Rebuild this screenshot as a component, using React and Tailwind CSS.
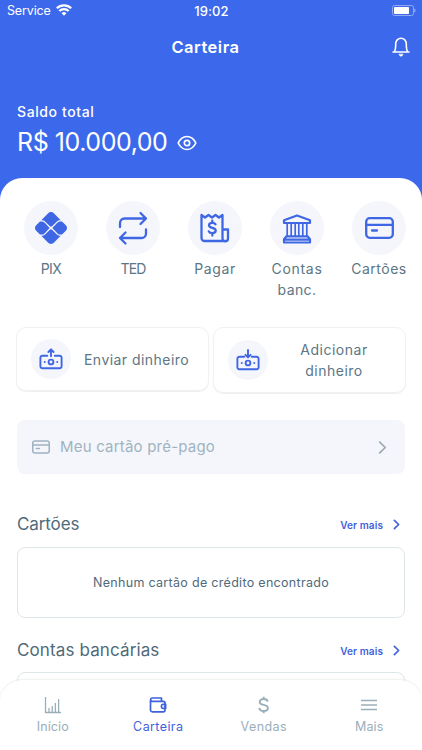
import React from "react";

const shortcuts = [
  { id: "pix", icon: PixIcon, lines: [["PIX", "tracking-[-0.6px]"]] },
  { id: "ted", icon: RepeatIcon, lines: [["TED", "tracking-[-0.9px]"]] },
  { id: "pagar", icon: BillIcon, lines: [["Pagar", "tracking-[0.6px]"]] },
  { id: "contas", icon: BankIcon, lines: [["Contas", "tracking-[0.7px]"], ["banc.", "tracking-[0.4px]"]] },
  { id: "cartoes", icon: CardIcon, lines: [["Cartões", "tracking-[0.5px]"]] },
];

const tabs = [
  { id: "inicio", label: "Início", icon: ChartIcon, track: "tracking-[0.1px]" },
  { id: "carteira", label: "Carteira", icon: WalletIcon, track: "tracking-[0.4px]", active: true },
  { id: "vendas", label: "Vendas", icon: DollarIcon, track: "tracking-[0.4px]" },
  { id: "mais", label: "Mais", icon: MenuIcon, track: "tracking-[0.1px]" },
];

function PixIcon() {
  return (
    <svg width="34" height="34" viewBox="0 0 34 34" fill="currentColor">
      <path d="M7.300 9.300 13.900 2.400a4.300 4.300 0 0 1 6.200 0l6.600 6.900c-1.700 0-2.900.4-4 1.500l-4.400 4.300a1.900 1.900 0 0 1-2.600 0l-4.400-4.300c-1.100-1.100-2.300-1.500-4-1.500z" />
      <path d="M7.300 24.700 13.900 31.600a4.300 4.300 0 0 0 6.200 0l6.600-6.900c-1.700 0-2.900-.4-4-1.500l-4.400-4.300a1.900 1.900 0 0 0-2.600 0l-4.400 4.300c-1.100 1.100-2.300 1.500-4 1.500z" />
      <path d="M6 10.400h1.700c1.200 0 2 .4 2.800 1.200L15.700 17l-5.200 5.400c-.8.800-1.600 1.200-2.800 1.200H6l-3.600-3.700a4.100 4.100 0 0 1 0-5.800z" />
      <path d="M28 10.400h-1.700c-1.200 0-2 .4-2.800 1.200L18.300 17l5.200 5.400c.8.800 1.600 1.200 2.800 1.200H28l3.600-3.700a4.100 4.100 0 0 0 0-5.800z" />
    </svg>
  );
}

function RepeatIcon() {
  return (
    <svg width="34" height="36" viewBox="0 0 34 36" fill="none" stroke="currentColor" strokeWidth="2.300" strokeLinecap="round" strokeLinejoin="round">
      <path d="M4 17v-3.500A4.500 4.500 0 0 1 8.500 8.500H30M24.500 3 30 8.500l-5.500 5.500" />
      <path d="M30 19.500V23.500a4.500 4.500 0 0 1-4.500 4.500H4M9.500 22.500 4 28l5.500 5.500" />
    </svg>
  );
}

function BillIcon() {
  return (
    <svg width="34" height="34" viewBox="0 0 34 34" fill="none" stroke="currentColor" strokeWidth="2.300" strokeLinecap="round" strokeLinejoin="round">
      <path d="M27 30H6.500a3 3 0 0 1-3-3V4l3.500 2.500L10.500 4 14 6.500 17.500 4 21 6.500 24.500 4v23.500a2.700 2.700 0 0 0 5.500 0v-9h-5.500" />
      <path d="M17.500 13.300c-.5-1-1.700-1.500-3.200-1.500-2 0-3.300.9-3.300 2.500 0 3.700 6.700 1.500 6.700 5.300 0 1.700-1.500 2.600-3.400 2.600-1.700 0-3-.6-3.500-1.800M14.300 9.600v2.200M14.300 22.300v2.200" />
    </svg>
  );
}

function BankIcon() {
  return (
    <svg width="34" height="34" viewBox="0 0 34 34" fill="none" stroke="currentColor" strokeWidth="2.200" strokeLinejoin="round">
      <path d="M4 9.300 17 4.500l13 4.800V12H4zM6.500 25.300h21l2.500 3v3.200H4v-3.200zM4.500 28.600h25" />
      <path d="M7.200 12v13M11.200 12v13M15.200 12v13M18.800 12v13M22.800 12v13M26.800 12v13" strokeWidth="1.700" />
    </svg>
  );
}

function CardIcon({ width = 29, height = 22, stroke = 2.3 }) {
  return (
    <svg width={width} height={height} viewBox="0 0 29 22" fill="none" stroke="currentColor" strokeWidth={stroke} strokeLinecap="round">
      <rect x="1.200" y="1.200" width="26.600" height="19.600" rx="3.500" />
      <path d="M1.200 7.800h26.600M7 13.500h5" />
    </svg>
  );
}

function CashIcon({ up }) {
  return (
    <svg width="24" height="24" viewBox="0 0 24 24" fill="none" stroke="currentColor" strokeWidth="1.900" strokeLinecap="round" strokeLinejoin="round">
      <path d="M8.300 8.700H3.500A2 2 0 0 0 1.400 10.700v8.600a2 2 0 0 0 2.100 2h17a2 2 0 0 0 2.100-2v-8.600a2 2 0 0 0-2.100-2h-4.800" />
      <circle cx="12" cy="15" r="2.400" />
      <path d="M5.700 15h.1M18.200 15h.1" />
      {up ? <path d="M12 9.200V2.500M9.400 5 12 2.300 14.600 5" /> : <path d="M12 2v7M9.400 6.800 12 9.400l2.600-2.600" />}
    </svg>
  );
}

function ChartIcon() {
  return (
    <svg width="18" height="18" viewBox="0 0 18 18" fill="none" stroke="currentColor" strokeWidth="1.300">
      <path d="M1.500 1v15.500H17M5 12v4M8.200 10v6M11.400 7v9M14.600 3v13" />
    </svg>
  );
}

function WalletIcon() {
  return (
    <svg width="18" height="18" viewBox="0 0 18 18" fill="none" stroke="currentColor" strokeWidth="1.700" strokeLinejoin="round">
      <path d="M1.500 4v10A1.800 1.800 0 0 0 3.300 15.800h11a1.700 1.700 0 0 0 1.700-1.700V7a1.700 1.700 0 0 0-1.700-1.700H3.300a1.600 1.600 0 0 1 0-3.300h9.200v3.200" />
      <path d="M16.800 8.300h-2.400a2.100 2.100 0 0 0 0 4.200h2.400z" fill="currentColor" fillOpacity="0.250" strokeWidth="1.400" />
    </svg>
  );
}

function DollarIcon() {
  return (
    <svg width="18" height="18" viewBox="0 0 18 18" fill="none" stroke="currentColor" strokeWidth="1.900">
      <path d="M12.700 5.700C12.400 4 10.900 3 8.700 3S4.700 4.100 4.700 5.900C4.700 10.200 12.900 7.500 12.900 12c0 1.900-1.700 3-4.200 3s-4.200-1.200-4.400-3.200M8.700 .8V3M8.700 15v2.200" />
    </svg>
  );
}

function MenuIcon() {
  return (
    <svg width="18" height="18" viewBox="0 0 18 18" stroke="currentColor" strokeWidth="1.500">
      <path d="M1 4.500h16M1 9h16M1 13.500h16" />
    </svg>
  );
}

function Chevron({ size = 14, stroke = 1.7 }) {
  return (
    <svg width={size} height={size} viewBox="0 0 14 14" fill="none" stroke="currentColor" strokeWidth={stroke} strokeLinecap="round" strokeLinejoin="round">
      <path d="m4.700 2.500 4.600 4.500-4.600 4.500" />
    </svg>
  );
}

function StatusBar() {
  return (
    <div className="grid grid-cols-3 h-[22px] pl-[7px] pr-[6px] items-center text-[13px] leading-none">
      <div className="flex items-center gap-[5px] pt-px">
        <span className="text-[12.5px] tracking-[-0.15px]">Service</span>
        <svg width="16" height="12" viewBox="0 0 16 12" fill="none" stroke="currentColor" strokeWidth="2.100" className="-mt-[3px]">
          <path d="M.8 4.300a10.300 10.300 0 0 1 14.400 0M3.300 7a6.800 6.800 0 0 1 9.400 0" />
          <path d="M5.600 9.300a3.400 3.400 0 0 1 4.800 0L8 11.700z" fill="currentColor" stroke="none" />
        </svg>
      </div>
      <span className="text-center font-medium tracking-[0.1px]">19:02</span>
      <svg width="24" height="11" viewBox="0 0 24 11" className="justify-self-end -mt-px">
        <rect x=".5" y=".5" width="21" height="10" rx="2" fill="none" stroke="#8fa9f5" />
        <rect x="2" y="2" width="15" height="7" rx=".8" fill="#fff" />
        <path d="M22.800 3.800v3.400" stroke="#8fa9f5" strokeWidth="1.200" />
      </svg>
    </div>
  );
}

function SectionTitle({ title, track }) {
  return (
    <div className="flex items-center justify-between h-6 text-[17px] leading-6 text-[#506a7a]">
      <h2 className={track}>{title}</h2>
      <a className="flex items-center gap-[7px] pr-[2px] text-[10px] font-semibold text-[#3f62dc] mt-px">
        <span className="tracking-[0.1px]">Ver mais</span>
        <Chevron size={13} stroke={1.8} />
      </a>
    </div>
  );
}

export default function App() {
  return (
    <div className="relative w-[422px] h-[750px] overflow-hidden bg-[#3c69eb] font-['Inter','Noto_Sans',sans-serif]">
      <header className="h-[178px] text-white">
        <StatusBar />
        <div className="grid grid-cols-[1fr_auto_1fr] items-center h-[50px] pr-[11px]">
          <span />
          <h1 className="text-[16.5px] font-semibold tracking-[0.5px]">Carteira</h1>
          <svg width="20" height="22" viewBox="0 0 20 22" fill="none" stroke="currentColor" strokeWidth="1.600" strokeLinecap="round" strokeLinejoin="round" className="justify-self-end">
            <path d="M2 16h16M3.500 15.800c.8-2 1.200-3.800 1.200-6V7.600a5.300 5.300 0 0 1 10.600 0v2.200c0 2.200.4 4 1.200 6" />
            <path d="M8.200 18.600c.3 1 .9 1.500 1.800 1.500s1.500-.5 1.800-1.500z" fill="currentColor" strokeWidth=".8" />
          </svg>
        </div>
        <div className="px-[17px] pt-[29px]">
          <div className="text-[14px] leading-[21px] font-medium tracking-[0.6px]">Saldo total</div>
          <div className="flex items-center h-[42px] gap-[10px]">
            <span className="text-[25px] tracking-[-0.45px]">R$ 10.000,00</span>
            <svg width="20" height="16" viewBox="0 0 20 16" fill="none" stroke="currentColor" strokeWidth="1.700">
              <path d="M1.200 8C3 4.200 6.100 1.500 10 1.500S17 4.200 18.800 8C17 11.800 13.900 14.500 10 14.500S3 11.800 1.200 8z" strokeLinejoin="round" />
              <circle cx="10" cy="8" r="2.700" />
            </svg>
          </div>
        </div>
      </header>

      <main className="h-[600px] rounded-t-[22px] bg-white px-4 pt-[23px] text-[#5c7684]">
        <div className="-mx-4 pl-[10px] flex">
          {shortcuts.map(({ id, icon: Icon, lines }) => (
            <div key={id} className="w-[82px] shrink-0 flex flex-col items-center">
              <div className="size-[54px] rounded-full bg-[#f5f6fb] text-[#3f67e4] flex items-center justify-center">
                <Icon />
              </div>
              <div className="mt-[3px] text-[14px] leading-[21px] text-center">
                {lines.map(([text, track]) => (
                  <div key={text} className={track}>{text}</div>
                ))}
              </div>
            </div>
          ))}
        </div>

        <div className="mt-[27px] h-[66px] flex items-start gap-1 text-[14px] leading-[21px]">
          <div className="w-[193px] h-[64px] rounded-[10px] border border-[#f0f1f3] shadow-[0_1px_1px_rgba(0,0,0,0.07)] flex items-center pl-[14px]">
            <div className="size-10 rounded-full bg-[#f5f6fb] text-[#3f67e4] flex items-center justify-center pb-px">
              <CashIcon up />
            </div>
            <span className="ml-[13px] tracking-[0.45px] whitespace-nowrap">Enviar dinheiro</span>
          </div>
          <div className="w-[193px] h-[66px] rounded-[10px] border border-[#f0f1f3] shadow-[0_1px_1px_rgba(0,0,0,0.07)] flex items-center pl-[14px]">
            <div className="size-10 rounded-full bg-[#f5f6fb] text-[#3f67e4] flex items-center justify-center">
              <CashIcon />
            </div>
            <div className="flex-1 pr-[5px] text-center tracking-[0.5px]">
              Adicionar
              <br />
              dinheiro
            </div>
          </div>
        </div>

        <div className="mt-[27px] ml-px mr-px h-[54px] rounded-[8px] bg-[#f5f6fb] text-[#9fb3c0] flex items-center pl-[15px] pr-[14px]">
          <CardIcon width={18} height={14} stroke={2.5} />
          <span className="ml-[10px] text-[15px] tracking-[0.2px]">Meu cartão pré-pago</span>
          <span className="ml-auto text-[#9aaab4]"><Chevron size={17} stroke={1.4} /></span>
        </div>

        <div className="mt-[38px] ml-px mr-px">
          <SectionTitle title="Cartões" track="tracking-[-0.1px]" />
          <div className="mt-[11px] h-[71px] rounded-[8px] border border-[#dfe6ea] flex items-center justify-center pt-[2px] text-[12.5px] text-[#506a7a]">
            <span className="tracking-[0.3px]">Nenhum cartão de crédito encontrado</span>
          </div>
        </div>
        <div className="mt-[20px] ml-px mr-px">
          <SectionTitle title="Contas bancárias" track="tracking-[0.12px]" />
          <div className="mt-[10px] h-[71px] rounded-[8px] border border-[#dfe6ea]" />
        </div>
      </main>

      <nav className="absolute bottom-0 inset-x-0 h-[70px] rounded-t-[22px] bg-white shadow-[0_-1px_2px_rgba(0,0,0,0.07)] grid grid-cols-4 text-[12.5px]">
        {tabs.map(({ id, label, icon: Icon, track, active }) => (
          <div key={id} className={`flex flex-col items-center pt-4 ${active ? "text-[#3f62dc]" : "text-[#9aaeba]"}`}>
            <Icon />
            <span className={`mt-1 leading-[18px] ${track}`}>{label}</span>
          </div>
        ))}
      </nav>
    </div>
  );
}
